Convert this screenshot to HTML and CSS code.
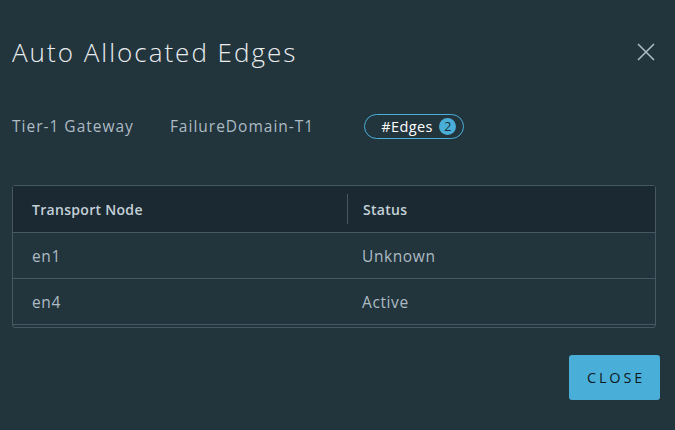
FILE: index.html
```html
<!DOCTYPE html>
<html lang="en">
<head>
  <meta charset="UTF-8">
  <meta name="viewport" content="width=device-width, initial-scale=1.0">
  <title>Auto Allocated Edges</title>
  <link rel="stylesheet" href="styles.css">
</head>
<body>
  <div class="modal">
    <div class="modal-header">
      <h1>Auto Allocated Edges</h1>
      <button class="close-x" aria-label="Close">
        <svg width="20" height="20" viewBox="0 0 20 20">
          <path d="M2 2 L18 18 M18 2 L2 18" stroke="#adbbc4" stroke-width="1.6" fill="none"/>
        </svg>
      </button>
    </div>

    <div class="info">
      <span class="info-item">Tier-1 Gateway</span>
      <span class="info-item">FailureDomain-T1</span>
      <span class="pill">#Edges <span class="badge">2</span></span>
    </div>

    <div class="grid">
      <div class="grid-row head">
        <div class="cell">Transport Node</div>
        <div class="cell divided">Status</div>
      </div>
      <div class="grid-row">
        <div class="cell">en1</div>
        <div class="cell">Unknown</div>
      </div>
      <div class="grid-row">
        <div class="cell">en4</div>
        <div class="cell">Active</div>
      </div>
    </div>

    <div class="modal-footer">
      <button class="btn-close">CLOSE</button>
    </div>
  </div>
</body>
</html>
```

FILE: styles.css
```css
body {
  margin: 0;
  background-color: #22343c;
  font-family: "Open Sans", sans-serif;
  color: #adbbc4;
}
.modal {
  width: 675px;
  height: 430px;
  box-sizing: border-box;
  padding: 0 15px 0 12px;
}
.modal-header {
  display: flex;
  justify-content: space-between;
  align-items: center;
  height: 104px;
  padding-bottom: 2px;
}
.modal-header h1 {
  margin: 0;
  font-size: 26px;
  font-weight: 300;
  color: #e9ecef;
  letter-spacing: 2px;
}
.close-x {
  background: none;
  border: none;
  padding: 0;
  margin-right: 4px;
  width: 20px;
  height: 20px;
  cursor: pointer;
}
.info {
  display: flex;
  align-items: center;
  height: 40px;
  font-size: 15.5px;
  letter-spacing: 1px;
}
.info-item {
  margin-right: 36px;
}
.info-item + .info-item {
  margin-right: 50px;
}
.pill {
  display: inline-flex;
  align-items: center;
  box-sizing: border-box;
  height: 25px;
  width: 100px;
  padding: 0 7px 0 16px;
  border: 1px solid #49afd9;
  border-radius: 13px;
  color: #ffffff;
  font-size: 14.5px;
  letter-spacing: 0.4px;
}
.badge {
  display: inline-flex;
  justify-content: center;
  align-items: center;
  width: 17px;
  height: 17px;
  margin-left: auto;
  border-radius: 50%;
  background-color: #49afd9;
  color: #1b2a32;
  font-size: 12.5px;
  letter-spacing: 0;
}
.grid {
  margin-top: 39px;
  margin-right: 4px;
  border: 1px solid #485764;
  border-radius: 3px;
  padding-bottom: 2px;
}
.grid-row {
  display: grid;
  grid-template-columns: 334px 1fr;
  height: 45px;
  border-bottom: 1px solid #485764;
  align-items: center;
  font-size: 15.5px;
  letter-spacing: 0.6px;
}
.grid-row.head {
  height: 46px;
  background-color: #1b2a32;
  font-size: 14px;
  font-weight: 600;
  color: #c4d0d8;
  letter-spacing: 0.3px;
}
.cell {
  padding-left: 19px;
  height: 100%;
  display: flex;
  align-items: center;
  box-sizing: border-box;
}
.grid-row .cell + .cell {
  padding-left: 15px;
}
.cell.divided {
  border-left: 1px solid #485764;
  height: 30px;
}
.modal-footer {
  display: flex;
  justify-content: flex-end;
  margin-top: 27px;
  margin-right: 0;
}
.btn-close {
  width: 91px;
  height: 45px;
  padding: 0 0 0 3px;
  background-color: #49afd9;
  border: none;
  border-radius: 3px;
  color: #0e1a20;
  font-family: "Open Sans", sans-serif;
  font-size: 14.5px;
  letter-spacing: 2.8px;
  cursor: pointer;
}
```
